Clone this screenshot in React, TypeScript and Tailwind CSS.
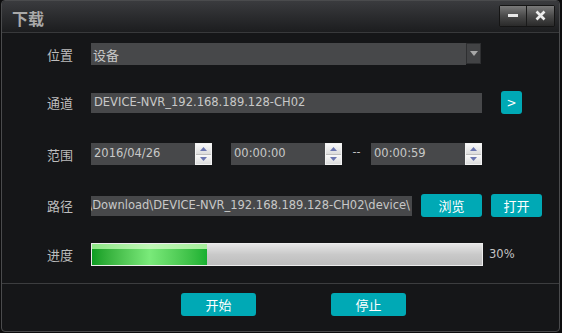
import React from "react";

const latin = { fontFamily: '"DejaVu Sans", "Noto Sans CJK SC", sans-serif' };
const cjk = { fontFamily: '"Noto Sans CJK SC", "Noto Sans", sans-serif' };

function Spinner() {
  return (
    <div className="w-[17px] h-[22px] border border-[#f2f2f2] bg-[#f2f2f2] flex flex-col shrink-0">
      <div className="flex-1 flex items-center justify-center bg-gradient-to-b from-[#fafafa] to-[#dcdcdc] border-b border-[#bdbdbd]">
        <svg width="7" height="4" viewBox="0 0 7 4"><path d="M0 4 L3.5 0 L7 4 Z" fill="#6b76b0" /></svg>
      </div>
      <div className="flex-1 flex items-center justify-center bg-gradient-to-b from-[#fafafa] to-[#dcdcdc]">
        <svg width="7" height="4" viewBox="0 0 7 4"><path d="M0 0 L3.5 4 L7 0 Z" fill="#6b76b0" /></svg>
      </div>
    </div>
  );
}

function Label({ children }: { children: React.ReactNode }) {
  return (
    <div className="w-[44px] shrink-0 text-[13px] text-[#bdbdbd] leading-none" style={cjk}>
      {children}
    </div>
  );
}

function TealBtn({ children, w, h = "h-[23px]" }: { children: React.ReactNode; w: string; h?: string }) {
  return (
    <div
      className={`${w} ${h} shrink-0 rounded-[3px] bg-[#00a9b5] flex items-center justify-center text-white text-[13px] leading-none`}
      style={cjk}
    >
      {children}
    </div>
  );
}

export default function App() {
  return (
    <div className="w-[562px] h-[333px] bg-[#0d0d0e] overflow-hidden">
      <div className="ml-[1px] w-[559px] h-[332px] border border-[#4a4b4d] rounded-[4px] bg-[#151618] flex flex-col overflow-hidden">
        {/* Title bar */}
        <div className="h-[32px] shrink-0 bg-gradient-to-b from-[#3a3b3e] to-[#1c1d1f] border-b border-[#38393b] flex items-center justify-between pl-[10px] pr-[4px]">
          <div className="text-[16px] font-bold text-[#a9a9a9] leading-none mt-[2px]" style={cjk}>
            下载
          </div>
          <div className="flex mt-[-2px] border border-[#151515] rounded-[2px]">
            <div className="w-[27px] h-[20px] bg-gradient-to-b from-[#7a7a7a] via-[#4a4a4a] to-[#2a2a2a] border-r border-[#1a1a1a] flex items-center justify-center">
              <div className="w-[10px] h-[3px] bg-[#e8e8e8]" />
            </div>
            <div className="w-[27px] h-[20px] bg-gradient-to-b from-[#7a7a7a] via-[#4a4a4a] to-[#2a2a2a] flex items-center justify-center">
              <svg width="11" height="11" viewBox="0 0 11 11">
                <path d="M1.5 1.5 L9.5 9.5 M9.5 1.5 L1.5 9.5" stroke="#ececec" strokeWidth="2.6" />
              </svg>
            </div>
          </div>
        </div>

        {/* Body */}
        <div className="flex flex-col pl-[45px] pt-[10px] text-[#c4c4c4]">
          {/* Row 1 */}
          <div className="h-[22px] flex items-center">
            <Label>位置</Label>
            <div className="w-[375px] h-[22px] bg-[#47484a] flex items-center pl-[2px] text-[13px] leading-none text-[#c8c8c8]" style={cjk}>
              设备
            </div>
            <div className="w-[15px] h-[21px] self-start bg-[#424345] border border-[#2e2f31] flex items-center justify-center">
              <svg width="8" height="5" viewBox="0 0 8 5"><path d="M0 0 L8 0 L4 5 Z" fill="#a8a8a8" /></svg>
            </div>
          </div>

          {/* Row 2 */}
          <div className="h-[23px] mt-[26px] flex items-center">
            <Label>通道</Label>
            <div className="w-[391px] h-[20px] bg-[#47484a] flex items-center pl-[3px] text-[11.5px] leading-none text-[#c8c8c8]" style={latin}>
              DEVICE-NVR_192.168.189.128-CH02
            </div>
            <div className="ml-[19px]">
              <TealBtn w="w-[21px]">
                <span style={latin} className="text-[12px]">&gt;</span>
              </TealBtn>
            </div>
          </div>

          {/* Row 3 */}
          <div className="h-[22px] mt-[29px] flex items-center">
            <Label>范围</Label>
            <div className="w-[104px] h-[22px] bg-[#47484a] flex items-center pl-[3px] text-[11.5px] leading-none text-[#c8c8c8]" style={latin}>
              2016/04/26
            </div>
            <Spinner />
            <div className="w-[94px] h-[22px] ml-[19px] bg-[#47484a] flex items-center pl-[3px] text-[11.5px] leading-none text-[#c8c8c8]" style={latin}>
              00:00:00
            </div>
            <Spinner />
            <div className="w-[29px] flex justify-center text-[11px] leading-none text-[#d0d0d0] mt-[-6px]" style={latin}>
              --
            </div>
            <div className="w-[94px] h-[22px] bg-[#47484a] flex items-center pl-[3px] text-[11.5px] leading-none text-[#c8c8c8]" style={latin}>
              00:00:59
            </div>
            <Spinner />
          </div>

          {/* Row 4 */}
          <div className="h-[23px] mt-[29px] flex items-center">
            <Label>路径</Label>
            <div className="w-[321px] h-[20px] bg-[#47484a] flex items-center justify-end overflow-hidden pr-[2px] text-[11.5px] leading-none text-[#c8c8c8] whitespace-nowrap" style={latin}>
              <span className="shrink-0">D:\Download\DEVICE-NVR_192.168.189.128-CH02\device\</span>
            </div>
            <div className="ml-[9px]">
              <TealBtn w="w-[61px]">浏览</TealBtn>
            </div>
            <div className="ml-[9px]">
              <TealBtn w="w-[51px]">打开</TealBtn>
            </div>
          </div>

          {/* Row 5 */}
          <div className="h-[23px] mt-[26px] flex items-center">
            <Label>进度</Label>
            <div className="w-[392px] h-[23px] border border-[#ececec] bg-gradient-to-b from-[#e6e6e6] via-[#c9c9c9] to-[#bdbdbd] relative flex">
              <div className="w-[115px] h-full flex flex-col">
                <div className="h-[5px] bg-gradient-to-r from-[#8fe888] via-[#c0f7b6] to-[#a6ee9c]" />
                <div className="flex-1 bg-gradient-to-r from-[#0a9d22] via-[#7aea7a] to-[#16b030]" />
              </div>
            </div>
            <div className="ml-[6px] text-[11.5px] leading-none text-[#c4c4c4]" style={latin}>
              30%
            </div>
          </div>
        </div>

        {/* Separator */}
        <div className="mt-[17px] h-[1px] bg-[#3c3d3f]" />

        {/* Footer */}
        <div className="flex pt-[9px] pl-[179px]">
          <TealBtn w="w-[75px]">开始</TealBtn>
          <div className="ml-[75px]">
            <TealBtn w="w-[75px]">停止</TealBtn>
          </div>
        </div>
      </div>
    </div>
  );
}
